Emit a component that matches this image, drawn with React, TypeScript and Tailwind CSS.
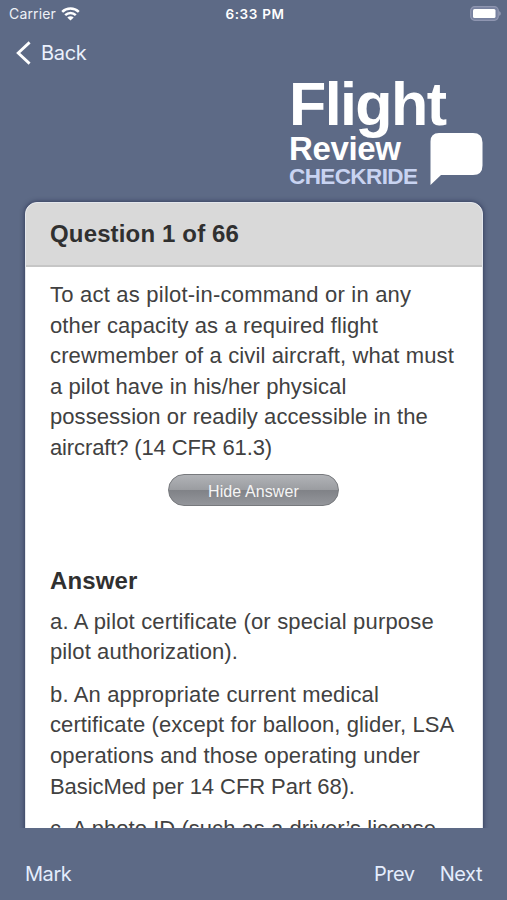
type Line = { text: string; tracking: string };

const question: Line[] = [
  { text: 'To act as pilot-in-command or in any', tracking: 'tracking-[0.22px]' },
  { text: 'other capacity as a required flight', tracking: 'tracking-[0.11px]' },
  { text: 'crewmember of a civil aircraft, what must', tracking: 'tracking-[0.13px]' },
  { text: 'a pilot have in his/her physical', tracking: 'tracking-[0.09px]' },
  { text: 'possession or readily accessible in the', tracking: 'tracking-[0.06px]' },
  { text: 'aircraft? (14 CFR 61.3)', tracking: 'tracking-[-0.13px]' },
];

const answers: Line[][] = [
  [
    { text: 'a. A pilot certificate (or special purpose', tracking: 'tracking-[0.17px]' },
    { text: 'pilot authorization).', tracking: 'tracking-[0.1px]' },
  ],
  [
    { text: 'b. An appropriate current medical', tracking: 'tracking-[0.15px]' },
    { text: 'certificate (except for balloon, glider, LSA', tracking: 'tracking-[0.1px]' },
    { text: 'operations and those operating under', tracking: 'tracking-[0.12px]' },
    { text: 'BasicMed per 14 CFR Part 68).', tracking: 'tracking-[-0.07px]' },
  ],
  [{ text: 'c. A photo ID (such as a driver’s license', tracking: 'tracking-[0.04px]' }],
];

function Lines({ lines }: { lines: Line[] }) {
  return (
    <p className="text-[22px] leading-[30.6px] whitespace-nowrap text-[#414141]">
      {lines.map(({ text, tracking }) => (
        <span key={text} className={`block ${tracking}`}>
          {text}
        </span>
      ))}
    </p>
  );
}

function StatusBar() {
  return (
    <div className="grid h-[27px] grid-cols-3 items-center pr-[6px] pl-[9px] font-[Inter,sans-serif] text-[#eef1f7]">
      <div className="flex items-center gap-[5px]">
        <span className="text-[14px] tracking-[0.15px]">Carrier</span>
        <svg width="19" height="14" viewBox="0 0 19 14" fill="none" stroke="white" strokeWidth="2.5">
          <path d="M1.2 4.9C5.8.4 13.2.4 17.8 4.9" />
          <path d="M4.2 8.2c3-2.9 7.600-2.900 10.600 0" />
          <path d="M9.500 13.600 6.300 10.500c1.800-1.700 4.600-1.700 6.400 0z" fill="white" stroke="none" />
        </svg>
      </div>
      <span className="pt-px text-center text-[13.5px] font-semibold tracking-[0.65px] whitespace-nowrap text-white">
        6:33 PM
      </span>
      <svg className="justify-self-end" width="31" height="15" viewBox="0 0 31 15">
        <rect x="0.7" y="0.7" width="27.6" height="13.6" rx="4" fill="#77819f" stroke="#8f96b1" strokeWidth="1.2" />
        <rect x="3" y="3" width="22.500" height="9" rx="1.500" fill="white" />
        <path d="M29.3 5.2c1.8.7 1.8 3.9 0 4.6z" fill="#a2a8c0" />
      </svg>
    </div>
  );
}

function Logo() {
  return (
    <div className="flex h-[125px] items-end justify-end pr-[24px]">
      <div className="flex h-[125px] w-[141px] flex-col pl-px whitespace-nowrap text-white">
        <span className="h-[55px] text-[61px] leading-[55px] font-bold tracking-[-1.6px]">Flight</span>
        <span className="h-[33px] text-[33px] leading-[33px] font-bold tracking-[-0.35px]">Review</span>
        <span className="h-[23px] text-[22.5px] leading-[23px] font-bold tracking-[-0.6px] text-[#c8d3f1]">CHECKRIDE</span>
      </div>
      <svg className="mb-[16px] shrink-0" width="54" height="54" viewBox="0 0 54 54">
        <path d="M10 1h34q9.500 0 9.500 9.500v23q0 9.500-9.500 9.500H12L1.500 53V9.500q0-8.500 8.500-8.500z" fill="white" />
      </svg>
    </div>
  );
}

export default function App() {
  return (
    <div className="flex h-[900px] w-[507px] flex-col overflow-hidden bg-[#5d6a86] font-['Liberation_Sans',Arial,sans-serif]">
      <StatusBar />
      <nav className="flex h-[50px] items-center gap-[9px] pt-px pl-[16px] font-[Inter,sans-serif] text-[20px] tracking-[-0.3px] text-[#eaf0fc]">
        <svg width="16" height="24" viewBox="0 0 16 24" fill="none" stroke="white" strokeWidth="2.8">
          <path d="M13.600 1.400 2.200 12l11.400 10.600" />
        </svg>
        <button>Back</button>
      </nav>
      <Logo />
      {/* the card runs on past the scroll area */}
      <div className="-mt-2 flex h-[634px] shrink-0 overflow-hidden px-[25px] pt-2">
        <main className="h-[660px] w-[458px] shrink-0 overflow-hidden rounded-t-[12px] border border-[#e4e7ec] bg-white shadow-[0_0_5px_rgba(25,32,65,0.75)]">
          <header className="flex h-[64px] items-center border-b-2 border-[#c6c6c6] bg-[#d9d9d9] pl-[24px]">
            <h1 className="text-[24px] font-bold tracking-[0.15px] text-[#303030]">Question 1 of 66</h1>
          </header>
          <section className="flex flex-col pt-[13px] pl-[24px]">
            <Lines lines={question} />
            <button className="mt-[10px] ml-[118px] h-[32px] w-[171px] rounded-full border-[1.5px] border-[#77797d] bg-[linear-gradient(#b1b3b7_0%,#9b9da1_49%,#808287_51%,#94969b_100%)] pt-[4px] text-[16px] tracking-[0.1px] text-[#f5f5f5]">
              Hide Answer
            </button>
            <h2 className="mt-[60px] text-[24px] leading-[30px] font-bold tracking-[0.15px] text-[#303030]">Answer</h2>
            <div className="mt-[11px] flex flex-col gap-[12px]">
              {answers.map((lines) => (
                <Lines key={lines[0].text} lines={lines} />
              ))}
            </div>
          </section>
        </main>
      </div>
      <footer className="flex flex-1 items-center gap-[25px] px-[25px] pt-[19px] font-[Inter,sans-serif] text-[20px] tracking-[-0.45px] text-[#e4edfd]">
        <button className="mr-auto">Mark</button>
        <button>Prev</button>
        <button>Next</button>
      </footer>
    </div>
  );
}
